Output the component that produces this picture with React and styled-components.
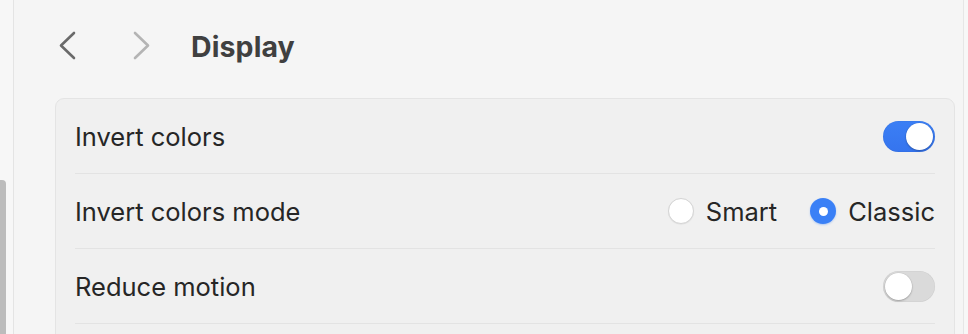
import React from 'react';
import styled, { createGlobalStyle } from 'styled-components';

const GlobalStyle = createGlobalStyle`
  html, body {
    margin: 0;
    padding: 0;
    background: #f5f5f5;
    font-family: Inter, "Liberation Sans", sans-serif;
    -webkit-font-smoothing: antialiased;
  }
`;

const Window = styled.div`
  display: flex;
  width: 968px;
  height: 334px;
  overflow: hidden;
  background: #f5f5f5;
`;

const Sidebar = styled.div`
  position: relative;
  width: 13px;
  flex: 0 0 13px;
  background: #f7f7f7;
  border-right: 1px solid #e4e4e4;
`;

const ScrollThumb = styled.div`
  position: absolute;
  left: 0;
  top: 180px;
  width: 6px;
  bottom: 0;
  background: #bcbcbc;
  border-top-right-radius: 4px;
`;

const Main = styled.main`
  flex: 1;
  display: flex;
  flex-direction: column;
  padding: 0 8px 0 41px;
`;

const RightEdge = styled.div`
  width: 4px;
  flex: 0 0 4px;
  background: #f7f7f7;
  border-left: 1px solid #e6e6e6;
`;

const Header = styled.header`
  flex: none;
  display: flex;
  align-items: center;
  height: 98px;
  padding: 0 0 6px 3px;
  box-sizing: border-box;
`;

const NavButton = styled.button`
  display: flex;
  align-items: center;
  justify-content: center;
  width: 20px;
  height: 32px;
  padding: 0;
  margin-right: ${(p) => p.$gap}px;
  border: none;
  background: none;
  color: ${(p) => (p.$disabled ? '#b4b4b4' : '#6a6a6a')};
`;

const Title = styled.h1`
  margin: 0;
  font-size: 28.5px;
  font-weight: 700;
  color: #404040;
  letter-spacing: 0.1px;
`;

const Panel = styled.section`
  flex: none;
  background: #f0f0f0;
  border: 1px solid #e4e4e4;
  border-radius: 9px;
  padding: 0 19px 24px;
`;

const Row = styled.div`
  display: flex;
  align-items: center;
  justify-content: space-between;
  height: 74px;
  border-bottom: 1px solid #e3e3e3;
`;

const Label = styled.span`
  font-size: 25.5px;
  color: #262626;
`;

const Toggle = styled.div`
  position: relative;
  width: 52px;
  height: 31px;
  border-radius: 16px;
  background: ${(p) => (p.$on ? 'linear-gradient(#3b7ff5, #3574ee)' : '#dadada')};
  box-shadow: inset 0 0 0 0.5px rgba(0, 0, 0, 0.06);
`;

const Knob = styled.div`
  position: absolute;
  top: 2px;
  left: ${(p) => (p.$on ? '23px' : '2px')};
  width: 27px;
  height: 27px;
  border-radius: 50%;
  background: #ffffff;
  box-shadow: 0 1px 2px rgba(0, 0, 0, 0.25), 0 0 0 0.5px rgba(0, 0, 0, 0.06);
`;

const RadioGroup = styled.div`
  display: flex;
  align-items: center;
  gap: 33px;
`;

const RadioOption = styled.label`
  display: flex;
  align-items: center;
  gap: 12px;
  font-size: 25.5px;
  color: #262626;
`;

const RadioCircle = styled.span`
  position: relative;
  width: 26px;
  height: 26px;
  box-sizing: border-box;
  border-radius: 50%;
  background: ${(p) => (p.$checked ? '#3a80f6' : '#ffffff')};
  border: ${(p) => (p.$checked ? 'none' : '1px solid #d4d4d4')};
  box-shadow: ${(p) => (p.$checked ? '0 1px 2px rgba(58,128,246,0.35)' : '0 0.5px 1px rgba(0,0,0,0.08)')};

  &::after {
    content: '';
    display: ${(p) => (p.$checked ? 'block' : 'none')};
    position: absolute;
    top: 50%;
    left: 50%;
    width: 9px;
    height: 9px;
    margin: -4.5px 0 0 -4.5px;
    border-radius: 50%;
    background: #ffffff;
  }
`;

const Chevron = ({ dir }) => (
  <svg width="20" height="32" viewBox="0 0 20 32" fill="none">
    <path
      d={dir === 'left' ? 'M16 3 L3 15.5 L16 28' : 'M4 3 L17 15.5 L4 28'}
      stroke="currentColor"
      strokeWidth="2.6"
      strokeLinecap="round"
      strokeLinejoin="round"
    />
  </svg>
);

const Switch = ({ on }) => (
  <Toggle $on={on}>
    <Knob $on={on} />
  </Toggle>
);

const Radio = ({ label, checked }) => (
  <RadioOption>
    <RadioCircle $checked={checked} />
    {label}
  </RadioOption>
);

export default function App() {
  return (
    <>
      <GlobalStyle />
      <Window>
        <Sidebar>
          <ScrollThumb />
        </Sidebar>
        <Main>
          <Header>
            <NavButton $gap={53}>
              <Chevron dir="left" />
            </NavButton>
            <NavButton $disabled $gap={40}>
              <Chevron dir="right" />
            </NavButton>
            <Title>Display</Title>
          </Header>
          <Panel>
            <Row>
              <Label>Invert colors</Label>
              <Switch on />
            </Row>
            <Row>
              <Label>Invert colors mode</Label>
              <RadioGroup>
                <Radio label="Smart" />
                <Radio label="Classic" checked />
              </RadioGroup>
            </Row>
            <Row>
              <Label>Reduce motion</Label>
              <Switch />
            </Row>
          </Panel>
        </Main>
        <RightEdge />
      </Window>
    </>
  );
}
